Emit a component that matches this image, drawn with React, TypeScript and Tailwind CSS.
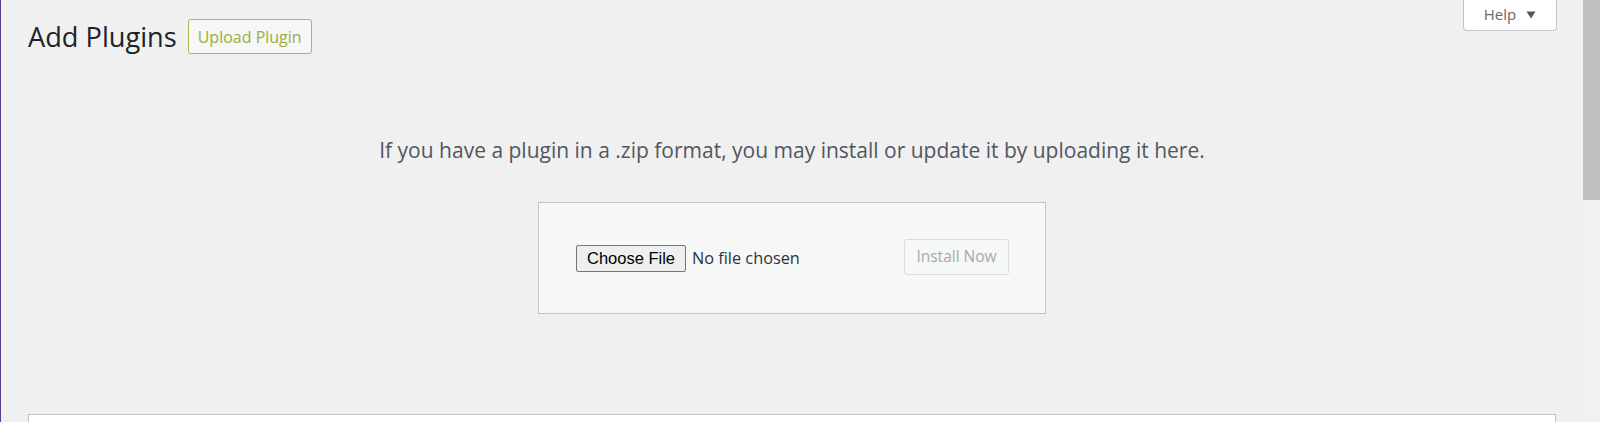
import { useState } from 'react'

const FONT = "font-['Open_Sans','Noto_Sans',sans-serif]"

export default function App() {
  const [fileName] = useState<string | null>(null)

  return (
    <div className={`flex h-[422px] w-full overflow-hidden bg-[#f0f0f1] ${FONT}`}>
      {/* admin menu edge */}
      <div className="w-px shrink-0 bg-[#5b3d8f]" />

      <div className="flex min-w-0 flex-1 flex-col pl-[27px] pr-[26px]">
        {/* title row */}
        <div className="flex items-start justify-between">
          <div className="mt-[19px] flex items-center gap-[11px]">
            <h1 className="text-[27.2px] leading-[35px] font-normal text-[#1d2327]">Add Plugins</h1>
            <button className="h-[35px] w-[124px] rounded-[3px] border border-[#a9bb4f] bg-[#f6f7f7] text-[16px] text-[#9aad3c]">
              Upload Plugin
            </button>
          </div>
          <button className="mr-[-1px] flex h-[31px] w-[94px] items-center justify-center gap-[10px] rounded-b-[4px] border border-t-0 border-[#c3c4c7] bg-white pb-[2px] text-[15px] text-[#646970]">
            Help
            <svg width="10" height="8" viewBox="0 0 10 8" className="mt-[1px]">
              <path d="M0.5 0.5 H9.5 L5 7.5 Z" fill="#50575e" />
            </svg>
          </button>
        </div>

        {/* upload area */}
        <p className="mt-[82px] text-center text-[21px] leading-[28px] text-[#50575e]">
          If you have a plugin in a .zip format, you may install or update it by uploading it here.
        </p>

        <div className="mt-[38px] flex justify-center">
          <div className="flex h-[112px] w-[508px] items-center justify-between border border-[#c3c4c7] bg-[#f6f7f7] pl-[37px] pr-[36px]">
            <div className="flex items-center gap-[6px]">
              <button className="h-[27px] w-[110px] rounded-[2px] border border-[#767676] bg-[#efefef] font-['Liberation_Sans',Arial,sans-serif] text-[16.5px] text-black">
                Choose File
              </button>
              <span className="text-[16.3px] text-[#2c3338]">{fileName ?? 'No file chosen'}</span>
            </div>
            <button
              disabled
              className="mt-[-2px] h-[36px] w-[105px] rounded-[3px] border border-[#dcdcde] bg-[#f6f7f7] text-[15.5px] text-[#a7aaad]"
            >
              Install Now
            </button>
          </div>
        </div>

        {/* plugin list card (cut off) */}
        <div className="mt-[100px] h-[40px] shrink-0 border border-[#c3c4c7] bg-white" />
      </div>

      {/* scrollbar */}
      <div className="w-[18px] shrink-0 bg-[#f1f1f1]">
        <div className="ml-[1px] h-[200px] w-[17px] bg-[#c1c1c1]" />
      </div>
    </div>
  )
}
